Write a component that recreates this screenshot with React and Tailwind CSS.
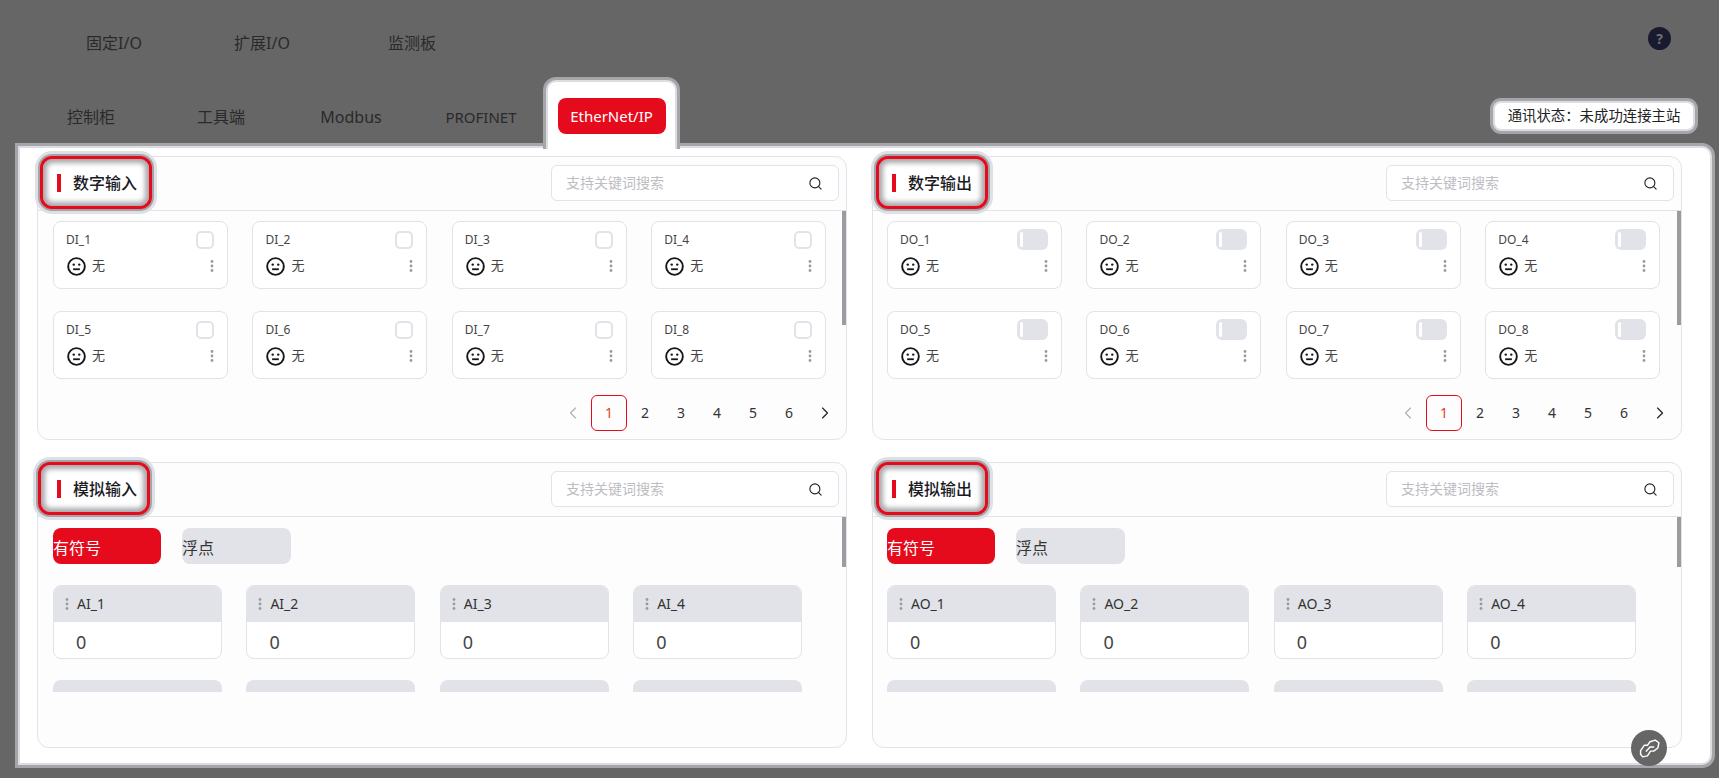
import { Search, ChevronLeft, ChevronRight } from 'lucide-react';

const topTabs = [
  { name: '控制柜', size: 'text-base' },
  { name: '工具端', size: 'text-base' },
  { name: 'Modbus', size: 'text-base' },
  { name: 'PROFINET', size: 'text-[15px]' },
];
const pages = ['2', '3', '4', '5', '6'];

const Kebab = () => (
  <svg width="4" height="14" viewBox="0 0 4 14" className="shrink-0 text-[#9a9a9f]">
    <circle cx="2" cy="2.5" r="1.4" fill="currentColor" />
    <circle cx="2" cy="7" r="1.4" fill="currentColor" />
    <circle cx="2" cy="11.5" r="1.4" fill="currentColor" />
  </svg>
);

const Face = () => (
  <svg width="19" height="19" viewBox="0 0 18 18" fill="none" stroke="#17171a" strokeWidth="1.8" className="shrink-0 ml-px">
    <circle cx="9" cy="9" r="7.9" />
    <circle cx="6.4" cy="7.2" r="1.15" fill="#17171a" stroke="none" />
    <circle cx="11.6" cy="7.2" r="1.15" fill="#17171a" stroke="none" />
    <path d="M5.8 11.6h6.4" strokeWidth="1.7" />
  </svg>
);

const SectionHeader = ({ title, boxClass }) => (
  <div className="flex items-start justify-between h-[54px] border-b border-[#e2e3e8]">
    <div className={`flex items-center gap-3 w-[112px] h-[53px] -mt-px border-[3px] border-[#e60b1c] rounded-[12px] bg-white shadow-[inset_0_0_5px_4px_#a8a8ac,0_0_0_2px_#a4a4a8,0_0_0_5px_#dfe0e5] ${boxClass}`}>
      <span className="w-1 h-[18px] bg-[#e60b1c] shrink-0"></span>
      <span className="text-base font-medium text-[#1a1a1f] whitespace-nowrap">{title}</span>
    </div>
    <div className="flex items-center w-[288px] h-[36px] mt-2 mr-[7px] pl-[14px] pr-[15px] border border-[#e2e3e8] rounded-md bg-white">
      <input
        readOnly
        placeholder="支持关键词搜索"
        className="flex-1 min-w-0 text-sm outline-none bg-transparent placeholder:text-[#bdbdc2]"
      />
      <Search size={15} strokeWidth={1.8} className="text-[#222]" />
    </div>
  </div>
);

const DigitalCard = ({ label, output }) => (
  <div className="h-[68px] rounded-lg border border-[#e2e3e8] bg-white pl-3 pr-[13px] pt-[7px]">
    <div className="flex items-center justify-between h-[21px]">
      <span className="text-xs text-[#444]">{label}</span>
      {output ? (
        <div className="flex items-center w-[31px] h-[21px] rounded-md bg-[#e2e3e8] pl-[3px]">
          <span className="w-[3px] h-[15px] bg-white rounded-sm"></span>
        </div>
      ) : (
        <span className="w-[18px] h-[18px] rounded-[5px] border-2 border-[#e2e3e8] bg-white"></span>
      )}
    </div>
    <div className="flex items-center justify-between mt-[6px] h-[20px]">
      <div className="flex items-center gap-[6px]">
        <Face />
        <span className="text-[13px] text-[#444]">无</span>
      </div>
      <Kebab />
    </div>
  </div>
);

const DigitalPanel = ({ title, prefix, output, boxClass, bodyClass }) => (
  <section className="h-[284px] rounded-xl border border-[#e2e3e8] bg-[#fdfdfe]">
    <SectionHeader title={title} boxClass={boxClass} />
    <div className="flex justify-between h-[172px]">
      <div className={`grid grid-cols-[repeat(4,175px)] gap-x-[24.4px] gap-y-[22px] pt-[10px] content-start ${bodyClass}`}>
        {[1, 2, 3, 4, 5, 6, 7, 8].map((n) => (
          <DigitalCard key={n} label={`${prefix}_${n}`} output={output} />
        ))}
      </div>
      <div className="w-1 h-[114px] bg-[#9c9c9f]"></div>
    </div>
    <div className="flex items-center justify-end h-[36px] mt-3 pr-[3px] text-sm text-[#333]">
      <span className="flex items-center justify-center w-[36px]">
        <ChevronLeft size={20} strokeWidth={1.4} className="text-[#b0b0b4]" />
      </span>
      <span className="flex items-center justify-center w-[36px] h-[36px] rounded-md border border-[#e60b1c] text-[#e0401f]">1</span>
      {pages.map((p) => (
        <span key={p} className="flex items-center justify-center w-[36px] h-[36px]">{p}</span>
      ))}
      <span className="flex items-center justify-center w-[36px]">
        <ChevronRight size={20} strokeWidth={1.4} className="text-[#222]" />
      </span>
    </div>
  </section>
);

const AnalogCard = ({ label }) => (
  <div className="h-[74px] rounded-lg border border-[#e2e3e8] bg-white overflow-hidden">
    <div className="flex items-center gap-[8px] h-[37px] bg-[#e2e3e8] pl-[11px] -mt-px">
      <Kebab />
      <span className="text-sm text-[#333]">{label}</span>
    </div>
    <div className="pl-[22px] pt-[6px] text-lg leading-[28px] text-[#444]">0</div>
  </div>
);

const AnalogPanel = ({ title, prefix, boxClass, bodyClass }) => (
  <section className="h-[286px] rounded-xl border border-[#e2e3e8] bg-[#fdfdfe]">
    <SectionHeader title={title} boxClass={boxClass} />
    <div className="flex justify-between h-[175px]">
      <div className={`pt-[11px] overflow-hidden ${bodyClass}`}>
        <div className="flex gap-[21px]">
          <div className="flex items-center w-[108px] h-[36px] pt-[3px] rounded-lg bg-[#e60b1c] text-base text-white">有符号</div>
          <div className="flex items-center w-[109px] h-[36px] pt-[3px] rounded-lg bg-[#e2e3e8] text-base text-[#333]">浮点</div>
        </div>
        <div className="grid grid-cols-[repeat(4,169px)] gap-x-[24.4px] gap-y-[21px] mt-[21px]">
          {[1, 2, 3, 4].map((n) => (
            <AnalogCard key={n} label={`${prefix}_${n}`} />
          ))}
          {/* next row is scrolled out, only the grey heads show */}
          {[5, 6, 7, 8].map((n) => (
            <div key={n} className="h-[37px] rounded-t-lg bg-[#e2e3e8]"></div>
          ))}
        </div>
      </div>
      <div className="w-1 h-[50px] bg-[#9c9c9f]"></div>
    </div>
  </section>
);

const App = () => {
  return (
    <div className="w-[1719px] h-[778px] overflow-hidden bg-[#666666] font-['Noto_Sans','Noto_Sans_CJK_SC',sans-serif] text-[#2a2a2a]">
      {/* top nav */}
      <div className="flex items-center h-[82px] pl-[86px] pr-[48px] text-base">
        <span className="w-[148px] mt-1">固定I/O</span>
        <span className="w-[154px] mt-1">扩展I/O</span>
        <span className="mt-1">监测板</span>
        <span className="ml-auto flex items-center justify-center w-[23px] h-[23px] rounded-full bg-[#1a1a2e] text-sm font-bold text-[#6f6f78] -mt-[5px]">?</span>
      </div>

      {/* second level tabs */}
      <div className="flex items-start h-[66px] pl-[26px] pr-[26px]">
        {topTabs.map((t) => (
          <div key={t.name} className={`flex items-center justify-center w-[130px] h-[36px] mt-[17px] ${t.size}`}>{t.name}</div>
        ))}
        <div className="relative z-10 flex justify-center w-[127px] h-[67px] ml-[2px] pt-[16px] rounded-t-lg bg-white shadow-[0_0_0_2px_#dcdde2,0_0_0_5px_#a6a6aa] [clip-path:inset(-8px_-8px_0_-8px)]">
          <div className="flex items-center justify-center w-[108px] h-[36px] pt-px rounded-lg bg-[#e60b1c] text-[15px] text-white">EtherNet/IP</div>
        </div>
        <div className="ml-auto flex items-center justify-center w-[198px] h-[26px] mt-[21px] rounded-md bg-white text-[14.4px] text-[#222] shadow-[0_0_0_2px_#dcdde2,0_0_0_5px_#a6a6aa]">
          通讯状态：未成功连接主站
        </div>
      </div>

      {/* main panel */}
      <div className="relative ml-5 mr-[9px] h-[615px] pl-[17px] pr-[27px] pt-2 rounded-r-lg bg-white shadow-[0_0_0_2px_#dcdde2,0_0_0_5px_#a6a6aa]">
        <div className="grid grid-cols-[810px_810px] gap-x-[25px] gap-y-[22px]">
          <DigitalPanel title="数字输入" prefix="DI" boxClass="ml-[2px] pl-[14px]" bodyClass="pl-[15px]" />
          <DigitalPanel title="数字输出" prefix="DO" output boxClass="ml-[3px] pl-[13px]" bodyClass="pl-[14px]" />
          <AnalogPanel title="模拟输入" prefix="AI" boxClass="pl-[16px]" bodyClass="pl-[15px]" />
          <AnalogPanel title="模拟输出" prefix="AO" boxClass="ml-[3px] pl-[13px]" bodyClass="pl-[14px]" />
        </div>
        <div className="absolute right-[43px] -bottom-[3px] flex items-center justify-center w-9 h-9 rounded-full bg-[#666666]">
          <svg width="21" height="19" viewBox="0 0 20 18" fill="none" stroke="white" strokeWidth="1.4" strokeLinejoin="round" strokeLinecap="round">
            <path d="M1.5 11 5 6h3l2.5-3.5L15.500 1 19 3.500 18 8.500 14 11.500h-3L8 16l-4.500 1L1.500 14.500Z" />
            <path d="M7 11.500 10.500 7.500H14" />
          </svg>
        </div>
      </div>
    </div>
  );
};

export default App;
